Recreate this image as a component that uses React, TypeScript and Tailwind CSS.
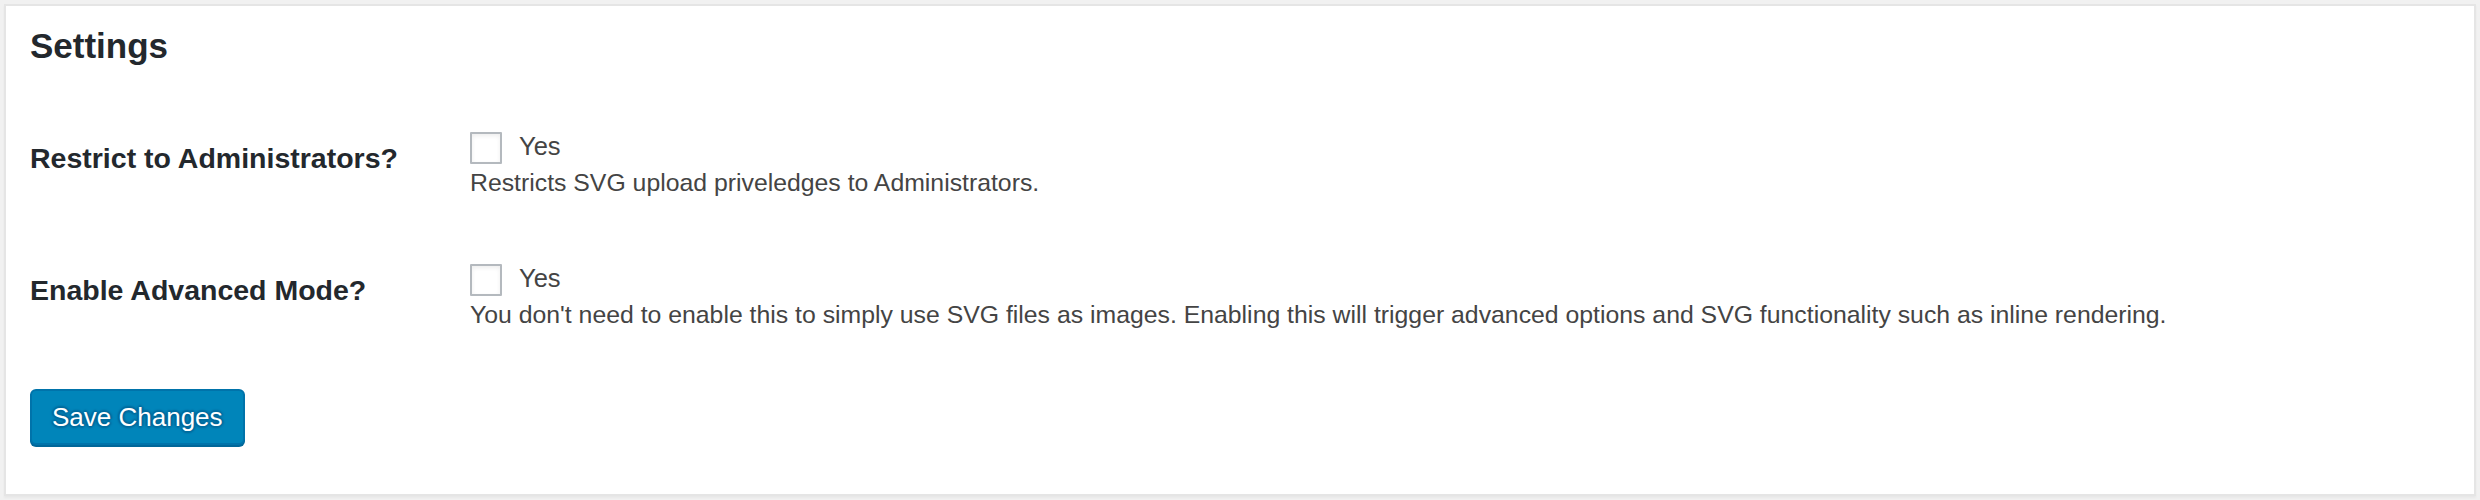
const rows = [
  {
    label: 'Restrict to Administrators?',
    description: 'Restricts SVG upload priveledges to Administrators.',
  },
  {
    label: 'Enable Advanced Mode?',
    description:
      "You don't need to enable this to simply use SVG files as images. Enabling this will trigger advanced options and SVG functionality such as inline rendering.",
  },
];

const SettingRow = ({ label, description, className }: { label: string; description: string; className?: string }) => (
  <div className={`flex ${className ?? ''}`}>
    <div className="w-[440px] shrink-0 pt-2 text-[28.5px] leading-[36px] font-bold text-[#23282d]">{label}</div>
    <div className="flex flex-col">
      <label className="flex items-start">
        <input
          type="checkbox"
          className="m-0 h-8 w-8 shrink-0 appearance-none rounded-[1px] border-2 border-[#b4b9be] bg-white shadow-[inset_0_2px_4px_rgba(0,0,0,0.07)]"
        />
        <span className="ml-[17px] text-[25.5px] leading-[28px] text-[#444]">Yes</span>
      </label>
      <p className="mt-1 text-[24.8px] leading-[30px] text-[#444]">{description}</p>
    </div>
  </div>
);

export default function App() {
  return (
    <div className="h-[500px] w-full overflow-hidden bg-[#f1f1f1] p-1 font-['Liberation_Sans',Arial,sans-serif]">
      <div className="flex h-full flex-col border-2 border-[#e5e5e5] bg-white px-6 pt-[22px] shadow-[0_2px_2px_rgba(0,0,0,0.04)]">
        <h2 className="text-[35px] leading-none font-bold text-[#23282d]">Settings</h2>

        <SettingRow {...rows[0]} className="mt-[69px]" />
        <SettingRow {...rows[1]} className="mt-[66px]" />

        <div className="mt-[59px]">
          <button
            type="button"
            className="flex h-14 items-center justify-center rounded-md border-2 border-[#0073aa] bg-[#0085ba] px-5 text-[26px] text-white shadow-[0_2px_0_#006799] [text-shadow:0_-2px_2px_#006799,2px_0_2px_#006799,0_2px_2px_#006799,-2px_0_2px_#006799]"
          >
            Save Changes
          </button>
        </div>
      </div>
    </div>
  );
}
